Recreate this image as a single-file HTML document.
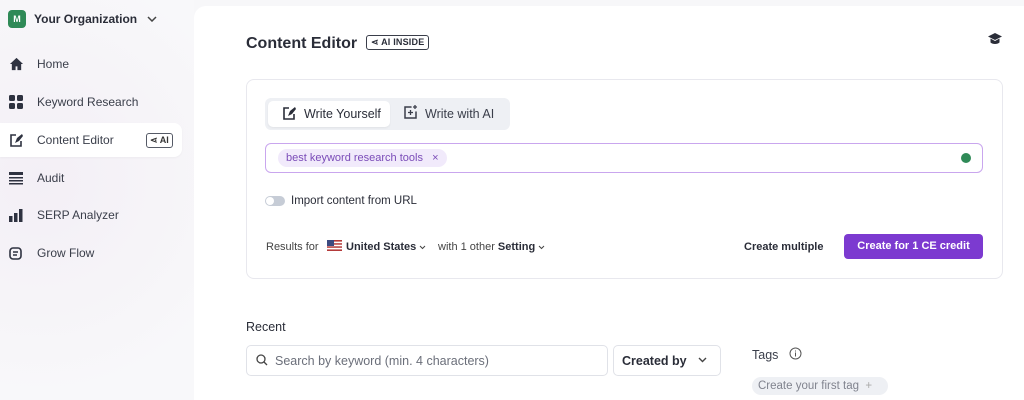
<!DOCTYPE html>
<html><head><meta charset="utf-8"><style>
*{box-sizing:border-box;margin:0;padding:0}
body{width:1024px;height:400px;overflow:hidden;background:#f7f7f9;font-family:"Liberation Sans",sans-serif;color:#1f2330;position:relative}
.side{position:absolute;left:0;top:0;width:194px;height:400px;background:radial-gradient(circle at 40px 180px,#f3eff6 0,#f6f4f8 120px,#f8f8fa 220px)}
.org{position:absolute;left:8px;top:10px;display:flex;align-items:center;font-size:12px;font-weight:bold;color:#2a2d38}
.org .m{width:18px;height:18px;background:#2f8a57;border-radius:4px;color:#fff;font-size:9px;display:flex;align-items:center;justify-content:center;margin-right:8px}
.nav{position:absolute;left:0;width:182px;height:34px;display:flex;align-items:center;font-size:12px;color:#3a3e4a}
.nav svg{position:absolute;left:9px}
.nav span{position:absolute;left:37px}
.nav.act{background:#fff;border-radius:0 8px 8px 0;box-shadow:0 1px 2px rgba(0,0,0,.04)}
.ai{position:absolute;left:146px;border:1px solid #555a66;border-radius:3px;font-size:9px;padding:1px 3px;color:#333;font-weight:bold}
.main{position:absolute;left:194px;top:6px;width:830px;height:394px;background:#fff;border-radius:12px 0 0 0}
h1{position:absolute;left:246px;top:35px;font-size:16px;font-weight:bold;color:#2a2d38}
.ins{position:absolute;left:366px;top:35px;border:1.5px solid #3a3e4a;border-radius:3px;font-size:9px;font-weight:bold;padding:1px 4px;color:#2a2d38;letter-spacing:.2px}
.card{position:absolute;left:246px;top:79px;width:757px;height:200px;border:1px solid #e8e8ee;border-radius:8px}
.tabs{position:absolute;left:265px;top:98px;width:245px;height:32px;background:#eef0f4;border-radius:6px}
.tab1{position:absolute;left:268px;top:101px;width:122px;height:26px;background:#fff;border-radius:5px;box-shadow:0 1px 2px rgba(0,0,0,.06)}
.t{position:absolute;font-size:12.5px;color:#2a2d38}
.kw{position:absolute;left:265px;top:143px;width:718px;height:30px;border:1px solid #c9a6ee;border-radius:6px}
.chip{position:absolute;left:278px;top:149px;height:18px;padding:0 8px;background:#f1eafb;border-radius:9px;font-size:11px;color:#7a4bb8;line-height:18px}
.btn{position:absolute;left:844px;top:234px;width:139px;height:25px;background:#7c3ad0;color:#fff;border-radius:4px;font-size:11px;font-weight:bold;text-align:center;line-height:25px}
.search{position:absolute;left:246px;top:345px;width:362px;height:31px;border:1px solid #e0e2e8;border-radius:5px}
.cb{position:absolute;left:613px;top:345px;width:108px;height:31px;border:1px solid #e0e2e8;border-radius:5px}
.tag{position:absolute;left:752px;top:377px;width:136px;height:18px;background:#eef0f4;border-radius:9px;font-size:11.5px;color:#80838e;line-height:18px;padding-left:6px}
.chev{display:inline-block;vertical-align:middle;margin-left:3px}
</style></head><body>
<div class="side">
 <div class="org"><div class="m">M</div>Your Organization<svg style="margin-left:10px" width="10" height="6" viewBox="0 0 10 6"><path d="M1 1l4 4 4-4" stroke="#444" stroke-width="1.5" fill="none"/></svg></div>
 <div class="nav" style="top:47px"><svg width="15" height="14" viewBox="0 0 16 15"><path d="M8 1L1 7.5h2V14h4v-4h2v4h4V7.5h2z" fill="#2e3240"/></svg><span>Home</span></div>
 <div class="nav" style="top:85px"><svg width="14" height="14" viewBox="0 0 14 14" fill="#2e3240"><rect x="0" y="0" width="6" height="6" rx="1.5"/><rect x="8" y="0" width="6" height="6" rx="1.5"/><rect x="0" y="8" width="6" height="6" rx="1.5"/><rect x="8" y="8" width="6" height="6" rx="1.5"/></svg><span>Keyword Research</span></div>
 <div class="nav act" style="top:123px"><svg width="15" height="14" viewBox="0 0 15 14"><path d="M7 2H2v11h10V8" stroke="#2e3240" stroke-width="1.6" fill="none"/><path d="M6 10l2-5 5-4 1 2-4 5z" fill="#2e3240"/></svg><span>Content Editor</span><div class="ai">⋖ AI</div></div>
 <div class="nav" style="top:161px"><svg width="14" height="13" viewBox="0 0 14 13" fill="#2e3240"><rect y="0" width="14" height="3"/><rect y="5" width="14" height="1.5"/><rect y="8" width="14" height="1.5"/><rect y="11" width="14" height="1.5"/></svg><span>Audit</span></div>
 <div class="nav" style="top:198px"><svg width="14" height="13" viewBox="0 0 14 13" fill="#2e3240"><rect x="0" y="7" width="3.5" height="6"/><rect x="5" y="4" width="3.5" height="9"/><rect x="10" y="0" width="3.5" height="13"/></svg><span>SERP Analyzer</span></div>
 <div class="nav" style="top:236px"><svg width="13" height="13" viewBox="0 0 13 13"><rect x="1" y="1" width="11" height="11" rx="3" stroke="#2e3240" stroke-width="1.6" fill="none"/><path d="M4 5h5M4 8h4" stroke="#2e3240" stroke-width="1.5"/></svg><span>Grow Flow</span></div>
</div>
<div class="main"></div>
<h1>Content Editor</h1><div class="ins">⋖ AI INSIDE</div>
<svg style="position:absolute;left:987px;top:32px" width="16" height="14" viewBox="0 0 16 14"><path d="M8 1L1 4.5 8 8l7-3.5z" fill="#2a2d38"/><path d="M3.5 6.5v4c2 2 7 2 9 0v-4L8 9z" fill="#2a2d38"/></svg>
<div class="card"></div>
<div class="tabs"></div><div class="tab1"></div>
<svg style="position:absolute;left:282px;top:106px" width="15" height="15" viewBox="0 0 15 15"><path d="M7 2H2v11h10V8" stroke="#2a2d38" stroke-width="1.6" fill="none"/><path d="M6 10l2-5 5-4 1 2-4 5z" fill="#2a2d38"/></svg>
<div class="t" style="left:304px;top:107px">Write Yourself</div>
<svg style="position:absolute;left:403px;top:105px" width="15" height="15" viewBox="0 0 15 15"><path d="M8 2H2v11h11V7" stroke="#3a3e4a" stroke-width="1.5" fill="none" stroke-linecap="round"/><path d="M7.5 5v5M5 7.5h5M12 0v4M10 2h4" stroke="#3a3e4a" stroke-width="1.3"/></svg>
<div class="t" style="left:425px;top:107px;color:#3a3e4a">Write with AI</div>
<div class="kw"></div>
<div class="chip">best keyword research tools &nbsp; ×</div>
<div style="position:absolute;left:961px;top:153px;width:10px;height:10px;border-radius:50%;background:#2f8a57"></div>
<div style="position:absolute;left:265px;top:196px;width:20px;height:10px;border-radius:5px;background:#c6ccd6"></div>
<div style="position:absolute;left:266px;top:197px;width:8px;height:8px;border-radius:50%;background:#fff"></div>
<div class="t" style="left:291px;top:195px;font-size:11.5px">Import content from URL</div>
<div class="t" style="left:266px;top:241px;font-size:11px;color:#444">Results for</div>
<svg style="position:absolute;left:327px;top:240px" width="15" height="11" viewBox="0 0 15 11"><rect width="15" height="11" fill="#b43a3a"/><rect y="1.6" width="15" height="1.6" fill="#fff"/><rect y="4.7" width="15" height="1.6" fill="#fff"/><rect y="7.8" width="15" height="1.6" fill="#fff"/><rect width="7" height="6" fill="#3b4a80"/></svg>
<div class="t" style="left:346px;top:241px;font-size:11px;font-weight:bold">United States<svg class="chev" width="7" height="5" viewBox="0 0 7 5"><path d="M1 1l2.5 2.5L6 1" stroke="#444" stroke-width="1" fill="none"/></svg></div>
<div class="t" style="left:438px;top:241px;font-size:11px;color:#444">with 1 other <b style="color:#2a2d38">Setting</b><svg class="chev" width="7" height="5" viewBox="0 0 7 5"><path d="M1 1l2.5 2.5L6 1" stroke="#444" stroke-width="1" fill="none"/></svg></div>
<div class="t" style="left:744px;top:241px;font-size:11px;font-weight:bold">Create multiple</div>
<div class="btn">Create for 1 CE credit</div>
<div class="t" style="left:246px;top:320px;font-size:12.5px;color:#2a2d38">Recent</div>
<div class="search"></div>
<svg style="position:absolute;left:256px;top:354px" width="12" height="12" viewBox="0 0 12 12"><circle cx="5" cy="5" r="4" stroke="#444" stroke-width="1.3" fill="none"/><path d="M8 8l3 3" stroke="#444" stroke-width="1.3"/></svg>
<div class="t" style="left:275px;top:354px;font-size:12.5px;color:#6b6f7a">Search by keyword (min. 4 characters)</div>
<div class="cb"></div>
<div class="t" style="left:622px;top:354px;font-size:12.5px;font-weight:bold">Created by</div>
<svg style="position:absolute;left:698px;top:357px" width="9" height="6" viewBox="0 0 9 6"><path d="M1 1l3.5 3.5L8 1" stroke="#444" stroke-width="1.4" fill="none"/></svg>
<div class="t" style="left:752px;top:348px;font-size:12.5px;color:#3a3e4a">Tags</div>
<svg style="position:absolute;left:789px;top:347px" width="13" height="13" viewBox="0 0 13 13"><circle cx="6.5" cy="6.5" r="5.5" stroke="#555" fill="none"/><path d="M6.5 5.5v4M6.5 3.5v1" stroke="#555"/></svg>
<div class="tag">Create your first tag &nbsp;<span style="color:#aaa">+</span></div>
</body></html>
